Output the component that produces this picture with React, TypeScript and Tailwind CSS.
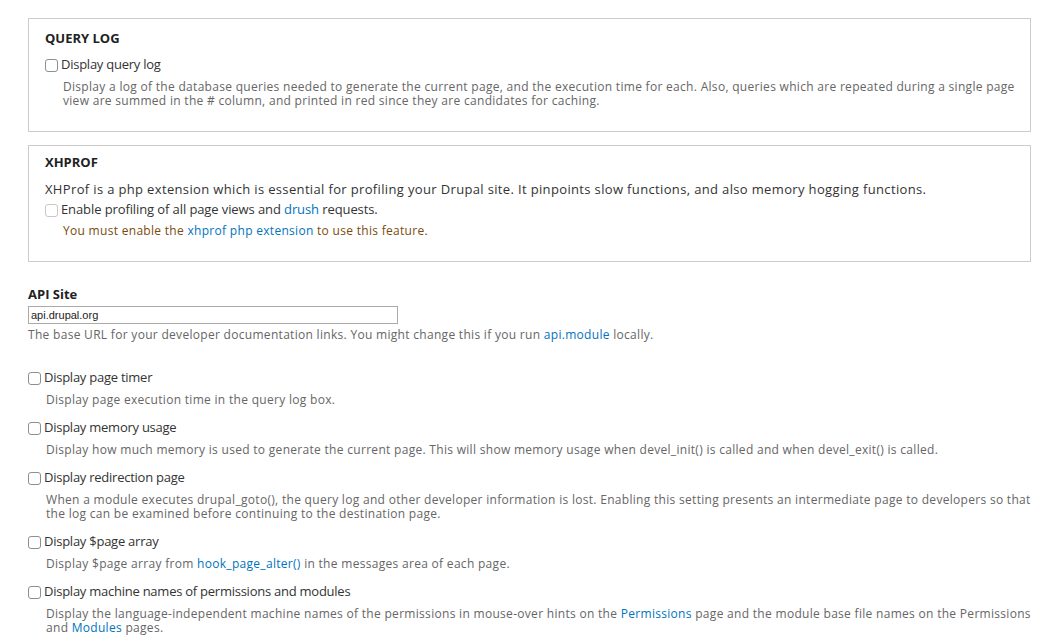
import React from "react";

const font = { fontFamily: '"Open Sans", "Liberation Sans", sans-serif' };

function Box({ faded }: { faded?: boolean }) {
  return (
    <span
      className={`inline-block w-[13px] h-[13px] rounded-[3px] border bg-white shrink-0 ${
        faded ? "border-[#c8c8c8]" : "border-[#8f8f8f]"
      }`}
    />
  );
}

function Check({
  label,
  faded,
  children,
}: {
  label: React.ReactNode;
  faded?: boolean;
  children?: React.ReactNode;
}) {
  return (
    <div>
      <label className="flex items-center gap-[3px] h-[18px] text-[13px] tracking-[-0.25px] text-[#333]">
        <Box faded={faded} />
        <span>{label}</span>
      </label>
      {children && (
        <div className="mt-[6px] ml-[18px] text-[12px] leading-[14px] tracking-[0.3px] text-[#666]">
          {children}
        </div>
      )}
    </div>
  );
}

const A = ({ children }: { children: React.ReactNode }) => (
  <a className="text-[#0074bd]">{children}</a>
);

export default function App() {
  return (
    <div className="bg-white w-[1052px] h-[644px] overflow-hidden pt-[18px] pl-[28px]" style={font}>
      <fieldset className="w-[1003px] border border-[#cccccc] pt-[10px] pb-[23px] pl-[16px] pr-[8px]">
        <div className="text-[13px] leading-[18px] font-bold text-[#222]">QUERY LOG</div>
        <div className="mt-[9px]">
          <Check label="Display query log">
            Display a log of the database queries needed to generate the current page, and the execution time for
            each. Also, queries which are repeated during a single page view are summed in the # column, and printed
            in red since they are candidates for caching.
          </Check>
        </div>
      </fieldset>

      <fieldset className="mt-[13px] w-[1003px] border border-[#cccccc] pt-[7px] pb-[23px] px-[16px]">
        <div className="text-[13px] leading-[18px] font-bold text-[#222]">XHPROF</div>
        <div className="mt-[9px] text-[13px] leading-[18px] tracking-[0.35px] text-[#333]">
          XHProf is a php extension which is essential for profiling your Drupal site. It pinpoints slow functions,
          and also memory hogging functions.
        </div>
        <div className="mt-[3px]">
          <label className="flex items-center gap-[3px] h-[18px] text-[13px] tracking-[-0.1px] text-[#333]">
            <Box faded />
            <span>
              Enable profiling of all page views and <A>drush</A> requests.
            </span>
          </label>
          <div className="mt-[5px] ml-[18px] text-[12px] leading-[14px] tracking-[0.3px] text-[#7a4c0c]">
            You must enable the <A>xhprof php extension</A> to use this feature.
          </div>
        </div>
      </fieldset>

      <div className="mt-[23px]">
        <div className="text-[13px] leading-[18px] font-bold text-[#222]">API Site</div>
        <input
          readOnly
          value="api.drupal.org"
          className="mt-[3px] block w-[370px] h-[18px] border border-[#aaa] px-[2px] text-[11px] text-[#222] outline-none"
          style={{ fontFamily: '"Liberation Sans", Arial, sans-serif' }}
        />
        <div className="mt-[4px] text-[12px] leading-[14px] tracking-[0.3px] text-[#666]">
          The base URL for your developer documentation links. You might change this if you run{" "}
          <A>api.module</A> locally.
        </div>
      </div>

      <div className="mt-[27px] w-[1003px] flex flex-col gap-[12px]">
        <Check label="Display page timer">Display page execution time in the query log box.</Check>
        <Check label="Display memory usage">
          Display how much memory is used to generate the current page. This will show memory usage when
          devel_init() is called and when devel_exit() is called.
        </Check>
        <Check label="Display redirection page">
          When a module executes drupal_goto(), the query log and other developer information is lost. Enabling this
          setting presents an intermediate page to developers so that the log can be examined before continuing to
          the destination page.
        </Check>
        <Check label="Display $page array">
          Display $page array from <A>hook_page_alter()</A> in the messages area of each page.
        </Check>
        <Check label="Display machine names of permissions and modules">
          Display the language-independent machine names of the permissions in mouse-over hints on the{" "}
          <A>Permissions</A> page and the module base file names on the Permissions and <A>Modules</A> pages.
        </Check>
      </div>
    </div>
  );
}
